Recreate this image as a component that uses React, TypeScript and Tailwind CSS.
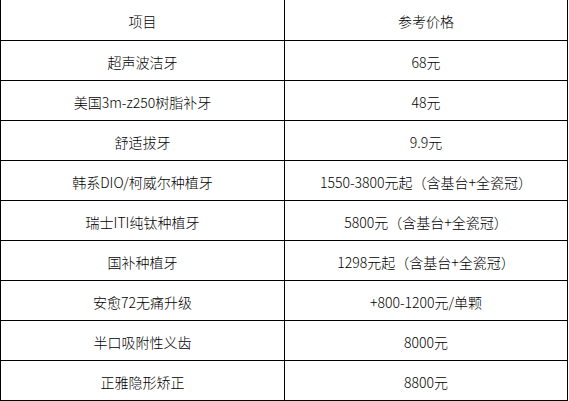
const rows: [string, string][] = [
  ["超声波洁牙", "68元"],
  ["美国3m-z250树脂补牙", "48元"],
  ["舒适拔牙", "9.9元"],
  ["韩系DIO/柯威尔种植牙", "1550-3800元起（含基台+全瓷冠）"],
  ["瑞士ITI纯钛种植牙", "5800元（含基台+全瓷冠）"],
  ["国补种植牙", "1298元起（含基台+全瓷冠）"],
  ["安愈72无痛升级", "+800-1200元/单颗"],
  ["半口吸附性义齿", "8000元"],
  ["正雅隐形矫正", "8800元"],
];

export default function App() {
  return (
    <div className="w-[569px] h-[401px] bg-white text-black text-[14px] font-light font-['Noto_Sans_CJK_SC',sans-serif]">
      <div className="w-[568px] border-l border-r border-black">
        <div className="flex h-[41px] border-b border-black">
          <div className="w-[284px] border-r border-black flex items-center justify-center pt-[3px]">项目</div>
          <div className="flex-1 flex items-center justify-center pt-[3px]">参考价格</div>
        </div>
        {rows.map(([name, price]) => (
          <div key={name} className="flex h-[40px] border-b border-black">
            <div className="w-[284px] border-r border-black flex items-center justify-center pt-[3px]">{name}</div>
            <div className="flex-1 flex items-center justify-center pt-[3px]">{price}</div>
          </div>
        ))}
      </div>
    </div>
  );
}
